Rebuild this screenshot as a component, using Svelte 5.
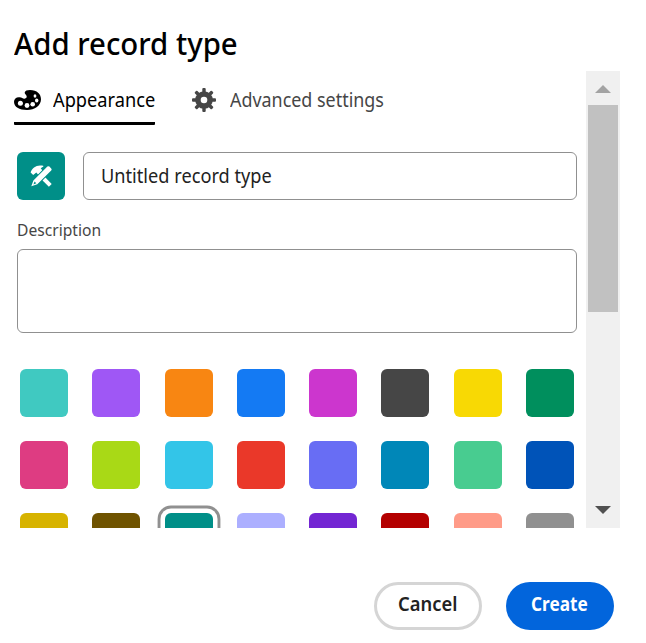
<script>
  const colors = [
    '#40c9c1', '#9f57f5', '#f88612', '#147af3', '#cc36ce', '#464646', '#f8d904', '#008f5d',
    '#de3c82', '#a9d916', '#33c5e8', '#ea3829', '#686df4', '#0087b8', '#48cc90', '#0053b8',
    '#d7b300', '#6f5300', '#008f88', '#acafff', '#7326d3', '#b40000', '#ff9b88', '#909090'
  ];
  let selected = $state(18);
  let tab = $state(0);
  let name = $state('Untitled record type');

  // Draws text condensed to an exact width, whatever the fallback face.
  function fit(node, width) {
    node.style.transform = `scaleX(${width / node.offsetWidth})`;
  }
</script>

<div class="dialog">
  <h1><span class="fit" use:fit={224}>Add record type</span></h1>
  <div class="body">
    <div class="content">
      <div class="tabs">
        <button class="tab" class:active={tab === 0} onclick={() => (tab = 0)}>
          <svg width="27" height="20" viewBox="0 0 27 20">
            <path fill="currentColor" d="M16 0C23 0 27 4 27 9.300C27 15.700 20.800 20 13 20C5.200 20 0 17 0 11.800C0 8.600 2.600 6.800 5.600 7.200C8 7.500 8.700 8.800 10.500 8.700C12.300 8.500 13 7.200 12.600 6C12.100 4.800 10.600 4.200 10.700 2.600C10.900.8 13.200 0 16 0Z" />
            <g fill="#fff">
              <circle cx="6.400" cy="13.200" r="2.500" />
              <circle cx="13" cy="15.500" r="2.400" />
              <circle cx="18.700" cy="14.300" r="2.300" />
              <ellipse cx="22.700" cy="10.500" rx="1.700" ry="2" />
              <ellipse cx="21" cy="6" rx="1.400" ry="1.700" />
            </g>
          </svg>
          <span class="box" style:width="102px"><span class="fit" use:fit={102}>Appearance</span></span>
        </button>
        <button class="tab second" class:active={tab === 1} onclick={() => (tab = 1)}>
          <svg width="24" height="24" viewBox="-12 -12 24 24">
            <g fill="currentColor">
              {#each [0, 45, 90, 135] as angle}
                <rect transform="rotate({angle})" x="-1.700" y="-12" width="3.400" height="24" rx="1" />
              {/each}
              <circle r="8.800" />
            </g>
            <circle r="3.300" fill="#fff" />
          </svg>
          <span class="box" style:width="154px"><span class="fit" use:fit={154}>Advanced settings</span></span>
        </button>
      </div>
      <div class="namerow">
        <button class="typeicon" aria-label="Change icon">
          <svg width="24" height="24" viewBox="0 0 24 24">
            <path fill="#fff" d="M1.600 8.400C3.200 3.500 8 .2 14.200 1.800L14.400 2.500L11.700 4.200L13.500 6.600L9.500 11L7.300 8.600L4.200 11Z" />
            <path fill="none" stroke="#fff" stroke-width="4" d="M14.500 14.500L21.300 21.300" />
            <path fill="#fff" stroke="#008f88" stroke-width="2" paint-order="stroke" d="M18.400 2.600Q19.400 1.700 20.400 2.600L22.200 4.400Q23.200 5.400 22.200 6.400L8.300 20.300L2.300 22.300L4.400 16.600Z" />
            <path fill="#008f88" d="M5.600 17.600L7.300 19.300L4.400 20.400Z" />
          </svg>
        </button>
        <div class="namefield"><span class="box" style:width="171px"><span class="fit" use:fit={171}>{name}</span></span></div>
      </div>
      <div class="label"><span class="fit" use:fit={84}>Description</span></div>
      <div class="description"></div>
      <div class="swatches">
        {#each colors as color, i}
          <button class="swatch" class:selected={selected === i} style:background={color} aria-label={color} onclick={() => (selected = i)}></button>
        {/each}
      </div>
    </div>
    <div class="scrollbar">
      <svg width="16" height="8" viewBox="0 0 16 8"><path fill="#a3a3a3" d="M8 0L16 8H0Z" /></svg>
      <div class="thumb"></div>
      <svg class="down" width="16" height="8" viewBox="0 0 16 8"><path fill="#505050" d="M0 0H16L8 8Z" /></svg>
    </div>
  </div>
  <footer>
    <button class="pill cancel"><span class="box" style:width="60px"><span class="fit" use:fit={59}>Cancel</span></span></button>
    <button class="pill create"><span class="box" style:width="58px"><span class="fit" use:fit={57}>Create</span></span></button>
  </footer>
</div>

<style>
  :global(body) { background: #fff; overflow: hidden; }
  .dialog {
    box-sizing: border-box;
    width: 646px;
    height: 643px;
    padding-top: 19px;
    font-family: "Noto Sans", "Open Sans", sans-serif;
    color: #222;
  }
  button { font: inherit; margin: 0; padding: 0; border: 0; background: none; color: inherit; }
  .fit { display: inline-block; white-space: nowrap; transform-origin: left center; }
  .box { display: block; white-space: nowrap; text-align: left; }
  h1 { margin: 0 0 0 14px; height: 52px; font-size: 30px; font-weight: 500; line-height: 50px; color: #000; }
  .body { display: flex; height: 457px; overflow: hidden; }
  .content { width: 586px; height: 457px; overflow: hidden; }
  .tabs { display: flex; gap: 37px; padding-left: 14px; height: 54px; }
  .tab { display: flex; align-items: center; box-sizing: border-box; height: 54px; border-bottom: 3px solid transparent; font-size: 20px; line-height: 28px; color: #464646; gap: 12px; }
  .tab svg { margin-top: 6px; }
  .tab .box { margin-top: 6px; }
  .tab.second { gap: 14px; }
  .tab.active { color: #000; border-color: #000; border-radius: 1px; }
  .namerow { display: flex; gap: 18px; margin: 27px 0 0 17px; }
  .typeicon { display: flex; align-items: center; justify-content: center; width: 48px; height: 48px; border-radius: 6px; background: #008f88; }
  .namefield { box-sizing: border-box; width: 494px; height: 48px; padding-left: 16.500px; border: 1px solid #909090; border-radius: 6px; font-size: 20px; line-height: 46px; }
  .label { margin: 18px 0 0 17px; height: 31px; font-size: 16px; line-height: 24px; color: #464646; }
  .description { box-sizing: border-box; margin-left: 17px; width: 560px; height: 84px; border: 1px solid #909090; border-radius: 6px; }
  .swatches { display: grid; grid-template-columns: repeat(8, 48px); column-gap: 24.290px; row-gap: 24px; margin: 36px 0 0 20px; }
  .swatch { width: 48px; height: 48px; border-radius: 6px; }
  .swatch.selected { box-shadow: 0 0 0 4.500px #fff, 0 0 0 7.400px #909090; }
  .scrollbar { display: flex; flex-direction: column; align-items: center; box-sizing: border-box; width: 34px; height: 457px; padding: 14px 0; background: #f0f0f0; }
  .thumb { width: 30px; height: 207px; margin-top: 12px; background: #c1c1c1; }
  .down { margin-top: auto; }
  footer { display: flex; justify-content: flex-end; gap: 24px; padding: 54px 32px 0 0; }
  .pill { display: flex; align-items: center; justify-content: center; box-sizing: border-box; width: 108px; height: 48px; border-radius: 24px; font-size: 19px; font-weight: 700; line-height: 26px; }
  .pill .box { margin-top: -5px; }
  .cancel { border: 3px solid #d5d5d5; font-weight: 600; }
  .create { background: #0265dc; color: #fff; }
</style>
